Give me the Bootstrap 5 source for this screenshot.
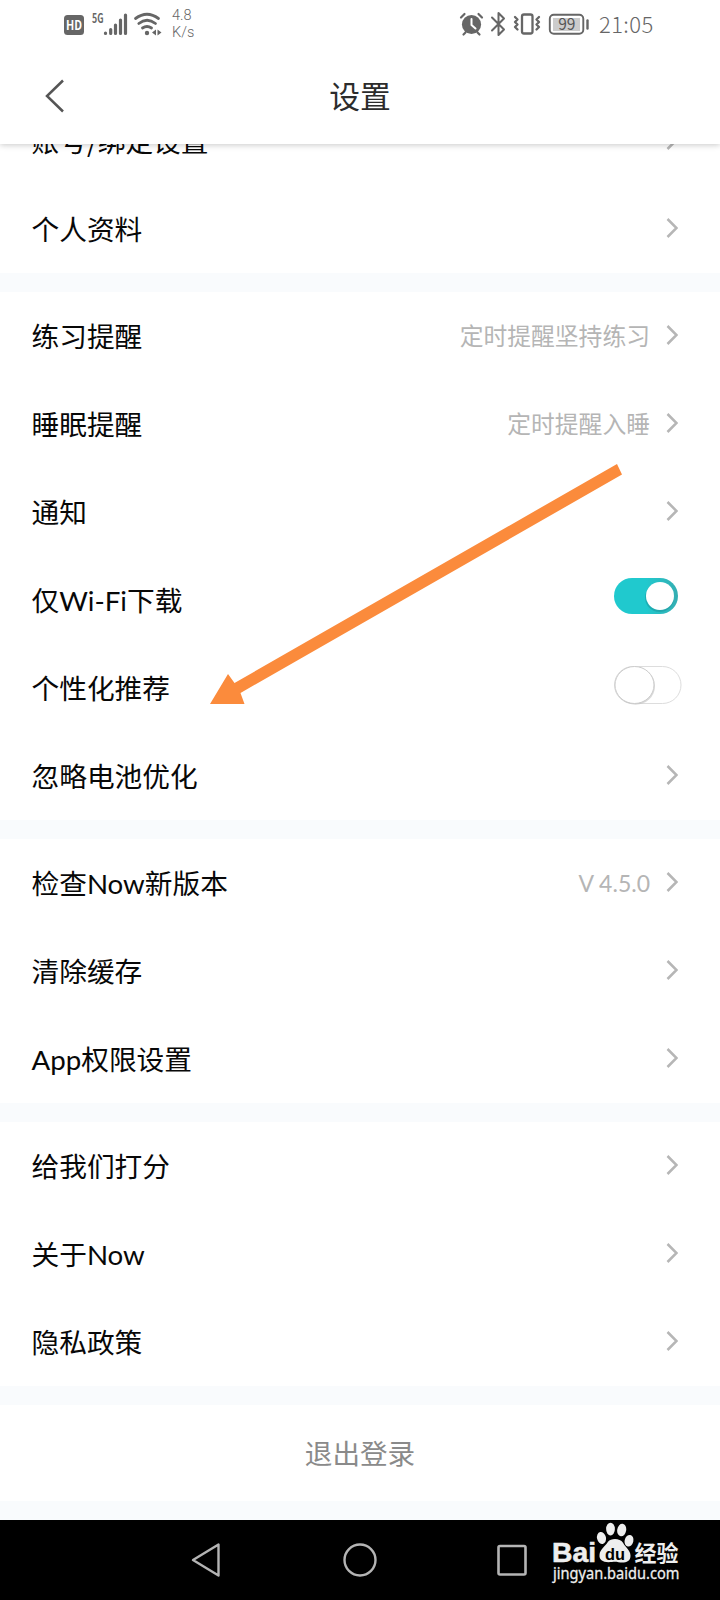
<!DOCTYPE html>
<html lang="zh-CN">
<head>
<meta charset="utf-8">
<meta name="viewport" content="width=device-width, initial-scale=1">
<title>设置</title>
<link href="https://cdn.jsdelivr.net/npm/bootstrap@5.3.0/dist/css/bootstrap.min.css" rel="stylesheet">
<style>
  body { width: 720px; height: 1600px; background: #f9fbfd; font-family: "Noto Sans CJK SC", sans-serif; color: #080808; overflow: hidden; }
  svg { display: block; flex: none; }
  svg text { font-family: "Noto Sans CJK SC", sans-serif; }
  .latin { font-family: Lato, sans-serif; line-height: 1; }
  .app-head { height: 144px; box-shadow: 0 1px 6px rgba(0,0,0,.22); z-index: 5; }
  .status { height: 48px; padding: 0 65px 0 62px; color: #666; }
  .speed { font: 300 14.5px/17.5px Roboto, sans-serif; color: #666; margin-left: 9px; }
  .clock { font: 300 22px/46px "Noto Sans CJK SC", sans-serif; width: 56px; white-space: nowrap; letter-spacing: .4px; margin-left: 8px; padding-bottom: 2px; }
  .titlebar { height: 96px; padding: 0 44px; grid-template-columns: 1fr auto 1fr; }
  .titlebar h1 { font-size: 30.8px; line-height: 40px; font-weight: 400; color: #2c2c2c; padding-bottom: 3px; }
  .group { background: #fff; margin-bottom: 19px; }
  .group-first { margin-top: -47px; }
  .item { height: 88px; padding: 0 42px 0 31.5px; font-size: 27.7px; line-height: 40px; }
  .item > span { padding-bottom: 2px; }
  .item .hint { font-size: 23.8px; color: #b5b5b5; margin-right: 16px; }
  .item .hint .latin { font-size: 23px; }
  .item .chev { margin-bottom: 2px; }
  .tog-on { margin-bottom: 8px; }
  .tog-off { margin: 0 -4px 6px 0; }
  .logout { height: 96px; font-size: 27.6px; color: #8a8a8a; background: #fff; }
  .sysnav { height: 80px; background: #000; padding-left: 191px; }
  .nav-home { margin-left: 122px; }
  .nav-recent { margin-left: 120px; }
  .nav-brand { margin-left: 23px; }
  .pointer { left: 200px; top: 455px; pointer-events: none; z-index: 6; }
</style>
</head>
<body class="position-relative">
<svg class="d-none"><defs>
  <symbol id="chev" viewBox="0 0 12 20"><path d="M1.500 1 10.500 10 1.500 19" fill="none" stroke="#b6b6b6" stroke-width="2.500"/></symbol>
</defs></svg>

<div class="d-flex flex-column h-100">
  <header class="app-head bg-white position-relative flex-shrink-0">
    <div class="status d-flex justify-content-between align-items-center">
      <div class="d-flex align-items-center">
        <svg width="101" height="48" viewBox="62 0 101 48" fill="#666">
          <rect x="64" y="15" width="20" height="20" rx="3.500"/>
          <text x="74" y="30" font-size="12.500" font-weight="700" fill="#fff" text-anchor="middle" textLength="16" lengthAdjust="spacingAndGlyphs">HD</text>
          <text x="92" y="22.500" font-size="12.500" font-weight="700" textLength="11.500" lengthAdjust="spacingAndGlyphs">5G</text>
          <path d="M105.500 33v.5M110.700 29.500v4M115.500 25v8.500M120.500 20v13.500M125.500 15v18.500" stroke="#666" stroke-width="3.200" stroke-linecap="round"/>
          <g fill="none" stroke="#666" stroke-width="2.800" stroke-linecap="round"><path d="M135.500 18.500Q147 10 158.500 18.500M138.800 23.500Q147 17 155.500 23.500M142.500 28Q147 25 151.500 28"/></g>
          <circle cx="147" cy="33" r="2.200"/><path d="m156 29.500v6l-4-3zM157.500 29.500v6l4-3z"/>
        </svg>
        <div class="speed">4.8<br>K/s</div>
      </div>
      <div class="d-flex align-items-center">
        <svg width="134" height="48" viewBox="457 0 134 48" fill="none" stroke="#666" stroke-linecap="round" stroke-linejoin="round">
          <circle cx="471.500" cy="24.500" r="9.600" fill="#666" stroke="none"/>
          <path d="M461 17.500 464.500 14M482 17.500 478.500 14M465.500 32.500 463.500 34.500M477.500 32.500 479.500 34.500" stroke-width="2.200"/>
          <path d="M471.500 19v6l4 3.500" stroke="#fff" stroke-width="2"/>
          <path d="M492 17.500 504 29.500 498.500 35V13L504 18.500 492 30.500" stroke-width="2"/>
          <rect x="522" y="14.500" width="10.500" height="19" rx="2" stroke-width="2.300"/>
          <path d="m515 17 2.500 2.500-2.500 2.500 2.500 2.500-2.500 2.500 2.500 2.500M539 17l-2.500 2.500 2.500 2.500-2.500 2.500 2.500 2.500-2.500 2.500" stroke-width="2.300"/>
          <rect x="549.800" y="14.800" width="33.500" height="19" rx="4" stroke-width="1.900"/>
          <rect x="553" y="18" width="27" height="13" fill="#ccc" stroke="none"/>
          <path d="M587.500 20.500v8" stroke-width="2.400"/>
          <text x="566.800" y="29.800" font-size="15.500" fill="#555" stroke="none" text-anchor="middle">99</text>
        </svg>
        <div class="clock">21:05</div>
      </div>
    </div>
    <div class="titlebar d-grid align-items-center">
      <svg width="22" height="34" viewBox="0 0 22 34"><path d="M19 1.500 3 17 19 32.500" fill="none" stroke="#555" stroke-width="2.500"/></svg>
      <h1 class="mb-0">设置</h1><span></span>
    </div>
  </header>

  <main class="flex-shrink-0">
    <section class="group group-first">
      <div class="item d-flex align-items-center"><span class="me-auto">账号/绑定设置</span><svg class="chev" width="12" height="20"><use href="#chev"/></svg></div>
      <div class="item d-flex align-items-center"><span class="me-auto">个人资料</span><svg class="chev" width="12" height="20"><use href="#chev"/></svg></div>
    </section>
    <section class="group">
      <div class="item d-flex align-items-center"><span class="me-auto">练习提醒</span><span class="hint">定时提醒坚持练习</span><svg class="chev" width="12" height="20"><use href="#chev"/></svg></div>
      <div class="item d-flex align-items-center"><span class="me-auto">睡眠提醒</span><span class="hint">定时提醒入睡</span><svg class="chev" width="12" height="20"><use href="#chev"/></svg></div>
      <div class="item d-flex align-items-center"><span class="me-auto">通知</span><svg class="chev" width="12" height="20"><use href="#chev"/></svg></div>
      <div class="item d-flex align-items-center"><span class="me-auto">仅<span class="latin">Wi-Fi</span>下载</span>
        <svg class="tog-on" width="64" height="36" viewBox="0 0 64 36">
          <defs><linearGradient id="teal"><stop offset=".5" stop-color="#20c9ce"/><stop offset="1" stop-color="#35aeb2"/></linearGradient></defs>
          <rect width="64" height="36" rx="18" fill="url(#teal)"/><circle cx="45.500" cy="19.500" r="14.500" fill="#168f94" opacity=".45"/><circle cx="46" cy="18" r="14" fill="#fff"/>
        </svg></div>
      <div class="item d-flex align-items-center"><span class="me-auto">个性化推荐</span>
        <svg class="tog-off" width="68" height="40" viewBox="0 0 68 40">
          <rect x=".5" y="1.500" width="66.500" height="37" rx="18.500" fill="#fff" stroke="#ddd"/>
          <ellipse cx="21.500" cy="21" rx="19.500" ry="18.800" fill="#bbb" opacity=".55"/>
          <ellipse cx="20.500" cy="20" rx="19.500" ry="18.500" fill="#fff" stroke="#ccc"/>
        </svg></div>
      <div class="item d-flex align-items-center"><span class="me-auto">忽略电池优化</span><svg class="chev" width="12" height="20"><use href="#chev"/></svg></div>
    </section>
    <section class="group">
      <div class="item d-flex align-items-center"><span class="me-auto">检查<span class="latin">Now</span>新版本</span><span class="hint"><span class="latin">V 4.5.0</span></span><svg class="chev" width="12" height="20"><use href="#chev"/></svg></div>
      <div class="item d-flex align-items-center"><span class="me-auto">清除缓存</span><svg class="chev" width="12" height="20"><use href="#chev"/></svg></div>
      <div class="item d-flex align-items-center"><span class="me-auto"><span class="latin">App</span>权限设置</span><svg class="chev" width="12" height="20"><use href="#chev"/></svg></div>
    </section>
    <section class="group">
      <div class="item d-flex align-items-center"><span class="me-auto">给我们打分</span><svg class="chev" width="12" height="20"><use href="#chev"/></svg></div>
      <div class="item d-flex align-items-center"><span class="me-auto">关于<span class="latin">Now</span></span><svg class="chev" width="12" height="20"><use href="#chev"/></svg></div>
      <div class="item d-flex align-items-center"><span class="me-auto">隐私政策</span><svg class="chev" width="12" height="20"><use href="#chev"/></svg></div>
    </section>
    <div class="logout d-flex align-items-center justify-content-center">退出登录</div>
  </main>

  <footer class="sysnav d-flex align-items-center mt-auto flex-shrink-0">
    <svg width="30" height="80" viewBox="191 0 30 80" fill="none" stroke="#b4b4b4" stroke-width="2.400" stroke-linejoin="round"><path d="M218.500 24.500v31L193 40z"/></svg>
    <svg class="nav-home" width="34" height="80" viewBox="343 0 34 80" fill="none" stroke="#b4b4b4" stroke-width="2.400"><circle cx="360" cy="40" r="15.500"/></svg>
    <svg class="nav-recent" width="30" height="80" viewBox="497 0 30 80" fill="none" stroke="#b4b4b4" stroke-width="2.600"><rect x="498.500" y="26" width="27" height="28.500" rx="1.500"/></svg>
    <svg class="nav-brand" width="134" height="80" viewBox="550 0 134 80" fill="#eee">
      <g transform="translate(0 -.7) scale(1 .933)">
      <text x="552" y="46.300" font-size="30" font-weight="700" style="font-family:'Liberation Sans',sans-serif" textLength="44" lengthAdjust="spacingAndGlyphs" stroke="#eee" stroke-width=".6">Bai</text>
      <ellipse cx="601.500" cy="20" rx="4.500" ry="6.500" transform="rotate(-12 601.500 20)"/><ellipse cx="610.500" cy="10.500" rx="4.400" ry="6.800"/><ellipse cx="621.700" cy="11.500" rx="4.500" ry="6.800" transform="rotate(8 621.700 11.500)"/><ellipse cx="629" cy="23" rx="4.400" ry="6.300" transform="rotate(12 629 23)"/>
      <path d="M608 24c3-4 12-4 15 1 3 6 7.500 8 7.500 14 0 7-6 8-12 7-4-1-6 0-10 0-6 0-9.500-3-9-8 .5-6 5-8 8.500-14z"/>
      <text x="605" y="43.500" font-size="18" font-weight="700" fill="#000" style="font-family:'Liberation Sans',sans-serif" textLength="20" lengthAdjust="spacingAndGlyphs">du</text>
      <text x="634.500" y="44.500" font-size="23.500" font-weight="700" textLength="44" lengthAdjust="spacingAndGlyphs">经验</text>
      <text x="553" y="64" font-size="16.500" style="font-family:'Noto Sans',sans-serif" textLength="126.500" lengthAdjust="spacingAndGlyphs" stroke="#eee" stroke-width=".3">jingyan.baidu.com</text>
      </g>
    </svg>
  </footer>
</div>

<svg class="pointer position-absolute" width="430" height="255" viewBox="200 455 430 255"><path d="M617 464 622 474.500 240.500 693 244.500 704H210L228 674 234.500 683z" fill="#fb8b3c"/></svg>
<script src="https://cdn.jsdelivr.net/npm/bootstrap@5.3.0/dist/js/bootstrap.bundle.min.js"></script>
</body>
</html>
